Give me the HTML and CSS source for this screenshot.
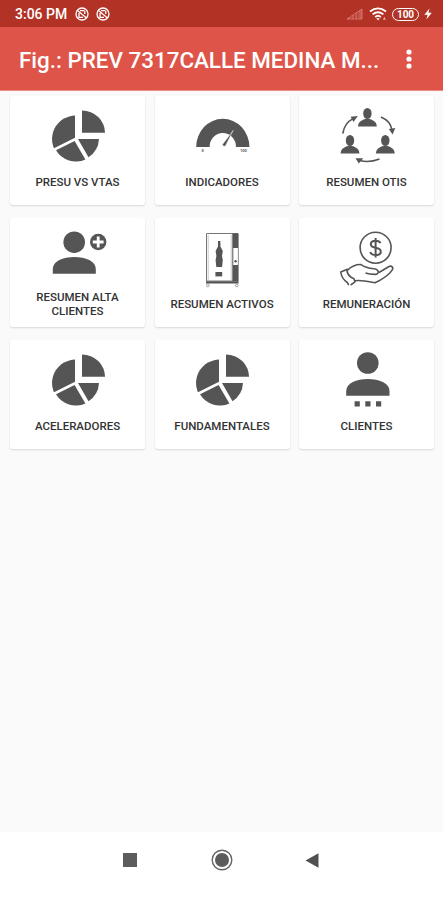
FILE: index.html
```
<!DOCTYPE html>
<html lang="es">
<head>
    <meta charset="utf-8">
    <title>Menu</title>
    <link rel="stylesheet" href="styles.css">
</head>
<body>
    <svg class="defs" width="0" height="0">
        <symbol id="pie" viewBox="0 0 70 64">
            <path d="M39 28.7V6.6A23 22.1 0 0 1 62 28.7Z"/>
            <path d="M32 11.6V33.8L11 44.2A23.3 23.3 0 0 1 32 11.6Z"/>
            <path d="M31.6 37L42.4 55.4A23 23 0 0 1 13 46.2Z"/>
            <path d="M35 35H56A23 23 0 0 1 45.5 53.2Z"/>
        </symbol>
        <symbol id="agent" viewBox="0 0 20 20">
            <ellipse cx="10" cy="6" rx="4.2" ry="5.5"/>
            <path d="M.6 19C.8 14 5 12.5 8 11.6h4c3 .9 7.2 2.4 7.4 7.4Z"/>
        </symbol>
        <symbol id="blocked" viewBox="0 0 14 14">
            <circle cx="7" cy="7" r="6" fill="none" stroke="#fff" stroke-width="1.3"/>
            <path d="M2.5 3.5L11.5 11M5 3.6h4.5M4 6v4.3h4M9.8 4v3" fill="none" stroke="#fff" stroke-width="1.3"/>
        </symbol>
    </svg>
    <div class="screen">
        <div class="status">
            <span class="time">3:06 PM</span>
            <svg class="blocked" width="14" height="14"><use href="#blocked"/></svg>
            <svg class="blocked" width="14" height="14"><use href="#blocked"/></svg>
            <div class="status-right">
                <svg width="17" height="12" viewBox="0 0 17 12">
                    <path d="M1 11L16 1V11Z" fill="#e08075" fill-opacity=".5" stroke="#dc8479" stroke-width=".8"/>
                    <path d="M5 8v3M8.5 6v5M12 4v7" stroke="#b33125" stroke-width=".8"/>
                </svg>
                <svg width="18" height="14" viewBox="0 0 18 14">
                    <path d="M1 4.5Q9 -1.8 17 4.5M3.6 7.4Q9 3 14.4 7.4M6.2 10Q9 7.8 11.8 10" fill="none" stroke="#fff" stroke-width="1.8"/>
                    <path d="M7.2 11.2h3.6L9 13.4Z" fill="#fff"/>
                    <path d="M14 12.8l1.3-3 1.5 3Z" fill="#e9b2a9"/>
                </svg>
                <span class="battery">100</span>
                <svg width="8" height="12" viewBox="0 0 8 12"><path d="M5.5 .5L.3 6.8H3.6L2.4 11.5L7.8 4.8H4.4Z" fill="#fff"/></svg>
            </div>
        </div>
        <div class="toolbar">
            <h1>Fig.: PREV 7317CALLE MEDINA M...</h1>
            <svg width="6" height="20" viewBox="0 0 6 20" fill="#fff">
                <circle cx="3" cy="3" r="2.6"/><circle cx="3" cy="10" r="2.6"/><circle cx="3" cy="17" r="2.6"/>
            </svg>
        </div>
        <div class="grid">
            <div class="card">
                <svg class="icon"><use href="#pie"/></svg>
                <p>PRESU VS VTAS</p>
            </div>
            <div class="card">
                <svg class="icon" viewBox="0 0 70 64">
                    <path d="M9.2 43A26.6 28.2 0 0 1 62.4 43H49A13.2 14 0 0 0 22.6 43Z"/>
                    <path d="M35.6 40.3L46.2 26.4L38.6 41.8A1.8 1.8 0 0 1 35.6 40.3Z" stroke="#fff" stroke-width=".5"/>
                    <text class="scale" x="14.5" y="48">0</text>
                    <text class="scale" x="53" y="48">100</text>
                </svg>
                <p>INDICADORES</p>
            </div>
            <div class="card">
                <svg class="icon" viewBox="0 0 70 64">
                    <use href="#agent" x="25.4" y="3.5" width="20" height="20"/>
                    <use href="#agent" x="8" y="30.5" width="20" height="20"/>
                    <use href="#agent" x="43.3" y="30.5" width="20" height="20"/>
                    <path class="line" d="M10.8 29.5Q12.5 19 21 14.6M49 13Q58.5 17 60 26M47.5 55Q37 59 28 56.5"/>
                    <path d="M18.6 12.7L25.8 12L21.5 18Z"/>
                    <path d="M56.8 25L63.3 24L60.6 30.5Z"/>
                    <path d="M23.5 54.2L31.2 54.2L26.8 59.5Z"/>
                </svg>
                <p>RESUMEN OTIS</p>
            </div>
            <div class="card">
                <svg class="icon" viewBox="0 0 70 64">
                    <circle cx="31.2" cy="16.2" r="10.8"/>
                    <path d="M9.8 47.8V43C9.8 35 20 31 31.3 31S52.8 35 52.8 43V47.8Z"/>
                    <circle cx="55.2" cy="16" r="8.2"/>
                    <path d="M55.2 10.6V21.4M49.8 16H60.6" stroke="#fff" stroke-width="2.8"/>
                </svg>
                <p>RESUMEN ALTA CLIENTES</p>
            </div>
            <div class="card">
                <svg class="icon" viewBox="0 0 70 64">
                    <path d="M19.5 7.5H51V55H19.5Z" fill="#fff" stroke="#777"/>
                    <path d="M21.2 9V54M44.2 9V54" stroke="#bbb" stroke-width=".8"/>
                    <path d="M45.3 7.5h6V55h-6Z"/>
                    <path d="M46.3 22h4.6v17h-4.6Z" fill="#fff"/>
                    <circle cx="48.6" cy="35.3" r="1.2"/>
                    <path d="M31 15h2.4v5.5l2.4 4.5-.8 5 .8 4-.7 7H29.3l-.7-7 .8-4-.8-5L31 20.5Z"/>
                    <path d="M28.4 46h6.8v4.4h-6.8Z"/>
                    <path d="M19 55.2h32.6v2.4H19Z"/>
                    <circle cx="20.8" cy="59.5" r="1.3" fill="none" stroke="#888" stroke-width=".8"/>
                    <circle cx="49.8" cy="59.5" r="1.3" fill="none" stroke="#888" stroke-width=".8"/>
                </svg>
                <p>RESUMEN ACTIVOS</p>
            </div>
            <div class="card">
                <svg class="icon" viewBox="0 0 70 64">
                    <circle class="line" cx="43.6" cy="21.7" r="15.5"/>
                    <path class="line dollar" d="M48.5 17.2Q47.5 14.8 43.6 14.8Q38.8 14.8 38.8 18.3Q38.8 21 43.6 21.8Q48.8 22.7 48.8 25.7Q48.8 29 43.6 29Q39.2 29 38.3 26M43.6 12V31.6"/>
                    <path class="line" d="M15.4 44.3C20 40 24 38.3 29 38.6C33 41.5 37 42.2 42 42.8C47.5 43.7 47.5 48.3 43 48.4Q37 48.2 33.5 47M47 46.5L56.5 40.7C60 39 62 42 59.8 44.6C56 50 49 54 43 56.8C36 55.5 29 53.8 23 54.8"/>
                    <path class="line" d="M16.8 59.2L15.3 56.5C11 53.5 9.2 50 8.8 46L14.8 43.4C15 48 17.5 51 22 52.8L23 55.8L18.7 59"/>
                </svg>
                <p>REMUNERACIÓN</p>
            </div>
            <div class="card">
                <svg class="icon"><use href="#pie"/></svg>
                <p>ACELERADORES</p>
            </div>
            <div class="card">
                <svg class="icon"><use href="#pie"/></svg>
                <p>FUNDAMENTALES</p>
            </div>
            <div class="card">
                <svg class="icon" viewBox="0 0 70 64">
                    <circle cx="35.8" cy="15" r="10.8"/>
                    <path d="M14.2 47.8V43C14.2 35 24.5 31 35.8 31S57.5 35 57.5 43V47.8Z"/>
                    <path d="M22.6 53.2h5.2v5.2h-5.2ZM33.3 53.2h5.2v5.2h-5.2ZM44 53.2h5.2v5.2H44Z"/>
                </svg>
                <p>CLIENTES</p>
            </div>
        </div>
    </div>
    <div class="navbar">
        <svg width="14" height="14"><rect width="14" height="14" fill="#5c5c5c"/></svg>
        <svg width="22" height="22" viewBox="0 0 22 22">
            <circle cx="11" cy="11" r="9.8" fill="none" stroke="#666" stroke-width="1.4"/>
            <circle cx="11" cy="11" r="7" fill="#5c5c5c"/>
        </svg>
        <svg width="14" height="15" viewBox="0 0 14 15"><path d="M.5 7.5L13.5 .3V14.7Z" fill="#505050"/></svg>
    </div>
</body>
</html>
```

FILE: styles.css
```
body {
    margin: 0;
    width: 448px;
    height: 900px;
    background-color: #fff;
    font-family: Roboto, sans-serif;
    overflow: hidden;
}
.defs {
    display: block;
}
.screen {
    width: 443px;
    height: 832px;
    background-color: #fafafa;
}
.status {
    display: flex;
    align-items: center;
    height: 27px;
    padding: 1px 11px 0 15px;
    box-sizing: border-box;
    background-color: #b33226;
    color: #fff;
}
.time {
    width: 54px;
    margin-right: 6px;
    font-size: 14px;
    font-weight: 500;
    white-space: nowrap;
}
.blocked {
    margin-right: 6.5px;
}
.status-right {
    display: flex;
    align-items: center;
    margin-left: auto;
}
.status-right svg:first-child {
    margin-right: 6px;
}
.battery {
    width: 25px;
    height: 11px;
    margin: 0 5px 0 5px;
    border: 1.5px solid #fff;
    border-radius: 7px;
    box-sizing: content-box;
    font-size: 10px;
    font-weight: 700;
    line-height: 11px;
    text-align: center;
}
.toolbar {
    display: flex;
    align-items: center;
    justify-content: space-between;
    height: 64px;
    padding: 0 31px 0 19px;
    box-sizing: border-box;
    background-color: #de5448;
    border-bottom: 1px solid #f08a85;
}
h1 {
    margin: 3px 0 0;
    color: #fff;
    font-size: 22.4px;
    font-weight: 500;
    white-space: nowrap;
}
.grid {
    display: grid;
    grid-template-columns: repeat(3, 135px);
    grid-auto-rows: 109px;
    gap: 13px 9.5px;
    padding: 5px 10px 0;
}
.card {
    display: flex;
    flex-direction: column;
    align-items: center;
    padding-top: 8px;
    box-sizing: border-box;
    background-color: #fff;
    border-radius: 3px;
    box-shadow: 0 1px 2px rgba(0, 0, 0, 0.14);
}
.icon {
    width: 70px;
    height: 64px;
    fill: #555;
}
.line {
    fill: none;
    stroke: #555;
    stroke-width: 1.6;
}
.dollar {
    stroke-width: 2;
}
.scale {
    font-size: 4px;
    font-weight: 700;
}
.card p {
    display: flex;
    align-items: center;
    width: 112px;
    height: 28px;
    margin: 0;
    justify-content: center;
    color: #333;
    font-size: 11.5px;
    font-weight: 500;
    line-height: 14px;
    text-align: center;
}
.navbar {
    display: flex;
    align-items: center;
    height: 56px;
    padding-left: 123px;
}
.navbar svg {
    margin-right: 74px;
}
.navbar svg:nth-child(2) {
    margin-right: 72px;
}
```
